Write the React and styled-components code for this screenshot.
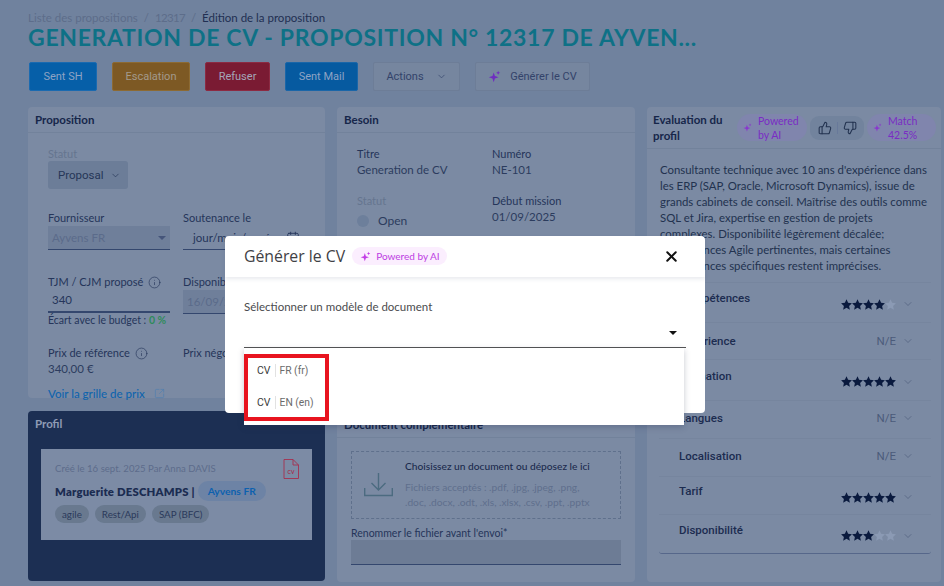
import React from 'react';
import styled, { createGlobalStyle } from 'styled-components';
import { ChevronDown, Calendar, Info, SquareArrowOutUpRight, ThumbsUp, ThumbsDown, X } from 'lucide-react';

const GlobalStyle = createGlobalStyle`
  html, body {
    margin: 0;
    padding: 0;
    width: 944px;
    height: 586px;
    overflow: hidden;
    background: #70829e;
    font-family: 'Lato', 'Liberation Sans', sans-serif;
  }
  * { box-sizing: border-box; }
`;

const Page = styled.div`
  position: relative;
  width: 944px;
  height: 586px;
  padding: 12px 0 0 28px;
  background: #70829e;
  color: #22314f;
`;

const Breadcrumb = styled.div`
  display: flex;
  gap: 6px;
  font-size: 11.5px;
  line-height: 12px;
  color: #5d6d8a;
`;

const CrumbId = styled.span`
  letter-spacing: -0.7px;
`;

const Current = styled.span`
  color: #212f52;
`;

const Title = styled.h1`
  margin: 0;
  font-family: 'Lato', sans-serif;
  font-size: 23px;
  line-height: 26px;
  font-weight: 700;
  letter-spacing: 0.68px;
  color: #0e7186;
  white-space: nowrap;
`;

const Toolbar = styled.div`
  display: flex;
  gap: 15px;
  margin: 12px 0 16px 1px;
`;

const ActionButton = styled.div`
  display: flex;
  align-items: center;
  justify-content: center;
  gap: ${(p) => p.$gap || 0}px;
  width: ${(p) => p.$w}px;
  height: 29px;
  border-radius: 2px;
  font-family: 'Roboto', sans-serif;
  font-size: 11px;
  color: ${(p) => p.$fg || '#8ea3c4'};
  background: ${(p) => p.$bg || 'transparent'};
  border: 1px solid ${(p) => p.$line || 'transparent'};
`;

const Columns = styled.div`
  display: grid;
  grid-template-columns: 297px 298px 294px;
  column-gap: 12px;
`;

const Column = styled.div`
  display: flex;
  flex-direction: column;
  gap: 13px;
`;

const Card = styled.section`
  height: ${(p) => p.$h}px;
  border-radius: 4px;
  background: ${(p) => (p.$dark ? '#1c2f53' : '#7b8aa3')};
`;

const CardHeader = styled.div`
  display: flex;
  align-items: center;
  height: ${(p) => p.$h || 26}px;
  padding: 0 7px;
  font-size: 11.5px;
  font-weight: 700;
  color: ${(p) => (p.$dark ? '#8f9cb5' : '#16264a')};
  border-bottom: 1px solid ${(p) => (p.$dark ? 'transparent' : '#72829b')};
`;

const CardBody = styled.div`
  padding: ${(p) => p.$pad || '14px 20px'};
`;

const FieldLabel = styled.div`
  display: flex;
  align-items: center;
  gap: 5px;
  height: 14px;
  font-size: 11px;
  line-height: 14px;
  white-space: nowrap;
  color: ${(p) => (p.$muted ? '#65758f' : '#25355a')};
`;

const RenameLabel = styled(FieldLabel)`
  margin-top: 7px;
  font-size: 10.5px;
`;

const StatusSelect = styled.div`
  display: flex;
  align-items: center;
  justify-content: space-between;
  width: 80px;
  height: 28px;
  margin: 0 0 22px;
  padding: 0 7px 0 10px;
  border-radius: 3px;
  background: #6c7d98;
  font-family: 'Roboto', sans-serif;
  font-size: 11.5px;
  color: #263657;
`;

const TwoCols = styled.div`
  display: grid;
  grid-template-columns: 122px 122px;
  column-gap: 13px;
  margin-bottom: ${(p) => p.$mb || 0}px;
`;

const Input = styled.div`
  display: flex;
  align-items: center;
  justify-content: space-between;
  height: ${(p) => p.$h || 24}px;
  margin-top: ${(p) => p.$mt ?? 1}px;
  padding: 0 ${(p) => p.$pr || p.$px || 4}px ${(p) => p.$pb || 0}px ${(p) => p.$px || 4}px;
  font-size: 11.5px;
  color: ${(p) => p.$fg || '#25355a'};
  background: ${(p) => p.$bg || 'transparent'};
  border-bottom: ${(p) => p.$line || 1}px solid #34476e;
`;

const Hint = styled.div`
  font-size: 10.5px;
  line-height: 13px;
  margin-top: 1px;
  white-space: nowrap;
  color: #25355a;
`;

const Good = styled.b`
  color: #2f8a5c;
`;

const Value = styled.div`
  margin-top: 1px;
  font-size: 11.5px;
  line-height: 15px;
  color: #2c3c5e;
`;

const PriceLink = styled.div`
  display: flex;
  align-items: center;
  gap: 9px;
  margin-top: 11px;
  font-size: 11.5px;
  font-weight: 500;
  color: #0f64ad;
`;

const ProfileBox = styled.div`
  position: relative;
  height: 91px;
  margin: 12px 13px 0;
  padding: 13px 14px 0;
  background: #7c8ba5;
`;

const Muted = styled.div`
  font-size: 9.6px;
  line-height: 14px;
  color: #5c6c8b;
`;

const NameRow = styled.div`
  display: flex;
  align-items: center;
  gap: 3px;
  margin-top: 5px;
  font-size: 11.3px;
  font-weight: 800;
  letter-spacing: 0.2px;
  white-space: nowrap;
  color: #1b2c51;
`;

const CompanyPill = styled.span`
  display: inline-flex;
  align-items: center;
  height: 20px;
  padding: 0 10px;
  border-radius: 10px;
  background: #6d83a5;
  font-size: 10.3px;
  font-weight: 700;
  letter-spacing: 0;
  color: #0d61af;
`;

const Tags = styled.div`
  display: flex;
  gap: 6px;
  margin-top: 4px;
`;

const Tag = styled.span`
  display: inline-flex;
  align-items: center;
  height: 18px;
  padding: 0 7px;
  border-radius: 9px;
  background: #69798f;
  font-size: 9.8px;
  color: #2b3a5b;
`;

const FileIcon = styled.svg`
  position: absolute;
  top: 10px;
  right: 13px;
`;

const InfoGrid = styled.div`
  display: grid;
  grid-template-columns: 135px 135px;
  row-gap: 17px;
`;

const StatusDot = styled.span`
  width: 12px;
  height: 12px;
  border-radius: 50%;
  background: #6d7f9b;
`;

const OpenRow = styled.div`
  display: flex;
  align-items: center;
  gap: 9px;
  margin-top: 5px;
  font-size: 12px;
  color: #2c3c5e;
`;

const DropZone = styled.div`
  display: flex;
  gap: 12px;
  height: 68px;
  padding: 7px 12px;
  border: 1px dashed #5f708c;
`;

const TrayWrap = styled.div`
  flex: none;
  display: flex;
  margin-top: 14px;
`;

const DropTitle = styled.div`
  font-size: 10.2px;
  line-height: 14px;
  font-weight: 500;
  white-space: nowrap;
  color: #1b2b4e;
`;

const DropNote = styled.div`
  margin-top: 7px;
  font-size: 10.2px;
  line-height: 15px;
  white-space: nowrap;
  color: #5f6f8d;
`;

const EvalHeader = styled(CardHeader)`
  height: 42px;
  padding: 0 5px 0 6px;
  justify-content: space-between;
`;

const EvalTitle = styled.div`
  width: 82px;
  line-height: 16px;
`;

const AiPill = styled.div`
  display: flex;
  align-items: center;
  gap: 6px;
  width: ${(p) => p.$w}px;
  height: 27px;
  padding-left: 6px;
  border-radius: 14px;
  background: #8085ad;
  font-size: 10.5px;
  font-weight: 400;
  line-height: 14px;
  color: #7a2cc4;
`;

const Feedback = styled.div`
  display: flex;
  align-items: center;
  justify-content: center;
  gap: 5px;
  width: 54px;
  height: 24px;
  margin: 0 1px;
  border-radius: 9px;
  background: #72839d;
  color: #22324f;
`;

const FeedbackSep = styled.span`
  width: 1px;
  height: 12px;
  background: #68799a;
`;

const Summary = styled.p`
  margin: 0;
  padding: 13px 0 0 13px;
  height: 133px;
  font-size: 11.4px;
  line-height: 16px;
  white-space: nowrap;
  color: #22324f;
`;

const Rows = styled.div`
  margin: 0 10px 0 12px;
  border-bottom: 1px solid #56678a;
  border-radius: 0 0 3px 3px;
`;

const Row = styled.div`
  display: flex;
  align-items: center;
  justify-content: space-between;
  height: ${(p) => p.$h}px;
  padding: 0 17px ${(p) => p.$lift || 0}px 20px;
  border-top: 1px solid #76859e;
`;

const RowLabel = styled.div`
  margin-top: ${(p) => (p.$up ? -9 : 0)}px;
  font-family: 'Roboto', sans-serif;
  font-size: 11.5px;
  font-weight: 500;
  color: #1c2c50;
`;

const RowValue = styled.div`
  display: flex;
  align-items: center;
  gap: 6px;
  margin-top: ${(p) => (p.$down ? 3 : 0)}px;
  font-family: 'Roboto', sans-serif;
  font-size: 11.5px;
  color: #4b5b7a;
`;

const Stars = styled.span`
  display: inline-flex;
`;

const Modal = styled.div`
  position: absolute;
  left: 225px;
  top: 236px;
  width: 480px;
  height: 177px;
  border-radius: 4px;
  background: #ffffff;
`;

const ModalHeader = styled.div`
  display: flex;
  align-items: center;
  gap: 7px;
  height: 41px;
  padding: 0 19px 1px;
  box-shadow: 0 2px 4px rgba(30, 50, 90, 0.1);
`;

const ModalTitle = styled.div`
  font-family: 'Open Sans', sans-serif;
  font-size: 15.8px;
  color: #3f4145;
`;

const AiBadge = styled.div`
  display: flex;
  align-items: center;
  gap: 5px;
  height: 18px;
  padding: 0 7px 0 8px;
  border-radius: 9px;
  background: #fbeefe;
  font-size: 10px;
  color: #bd3de3;
`;

const CloseButton = styled.div`
  display: flex;
  margin-left: auto;
  margin-right: 6px;
  color: #111111;
`;

const ModalLabel = styled.div`
  margin: 23px 19px 0;
  font-size: 11.5px;
  line-height: 14px;
  color: #4a4b4e;
`;

const ModelSelect = styled.div`
  position: relative;
  display: flex;
  align-items: center;
  justify-content: flex-end;
  height: 34px;
  margin: 0 19px;
  padding: 4px 9px 0 0;
  border-bottom: 1px solid #555555;
`;

const Caret = styled.span`
  width: 0;
  height: 0;
  margin-top: 1px;
  border-left: 4px solid transparent;
  border-right: 4px solid transparent;
  border-top: 4px solid ${(p) => p.$color || '#111111'};
`;

const Menu = styled.div`
  position: absolute;
  left: 0;
  top: 34px;
  width: 440px;
  height: 77px;
  padding-top: 6px;
  background: #ffffff;
  box-shadow: 0 2px 6px rgba(30, 40, 70, 0.25);
`;

const Highlight = styled.div`
  width: 85px;
  height: 67px;
  padding-left: 9px;
  border: 4px solid #e8141f;
`;

const Option = styled.div`
  display: flex;
  align-items: center;
  gap: 4px;
  height: 24px;
  margin-bottom: 8px;
  font-family: 'Roboto', sans-serif;
  font-size: 10.5px;
  color: #3c3c3c;
`;

const OptionName = styled.span`
  padding-left: 4px;
  border-left: 1px solid #e2e2e2;
  font-size: 10.3px;
  color: #6b6b6b;
`;

const Sparkle = ({ size = 12, color = '#8a35cf' }) => (
  <svg width={size} height={size} viewBox="0 0 16 16" fill={color}>
    <path d="M7 3 L8.5 7.5 L13 9 L8.5 10.5 L7 15 L5.5 10.5 L1 9 L5.5 7.5 Z" />
    <path d="M12.5 1 L13.2 2.8 L15 3.5 L13.2 4.2 L12.5 6 L11.8 4.2 L10 3.5 L11.8 2.8 Z" />
  </svg>
);

const TrayIcon = () => (
  <svg width="29" height="24" viewBox="0 0 29 24" fill="none" stroke="#4c6b80" strokeWidth="1.4">
    <path d="M.7 15 V22.5 H28.3 V15" />
    <path d="M14.5 0 V17 M7.5 10 L14.5 17 L21.5 10" />
  </svg>
);

const StarIcon = ({ on }) => (
  <svg width="11" height="11" viewBox="0 0 24 24" fill={on ? '#0a1a3e' : '#8b9ab4'}>
    <path d="M12 .8 L15.5 8.4 L23.8 9.4 L17.7 15 L19.3 23.2 L12 19.1 L4.7 23.2 L6.3 15 L.2 9.4 L8.5 8.4 Z" />
  </svg>
);

const ratings = [
  { label: 'Compétences', h: 40, on: 4 },
  { label: 'Expérience', h: 37 },
  { label: 'Formation', h: 41, on: 5 },
  { label: 'Langues', h: 38, lift: 3 },
  { label: 'Localisation', h: 38, lift: 3 },
  { label: 'Tarif', h: 38, on: 5 },
  { label: 'Disponibilité', h: 39, on: 3 },
];

const summaryLines = [
  "Consultante technique avec 10 ans d'expérience dans",
  'les ERP (SAP, Oracle, Microsoft Dynamics), issue de',
  'grands cabinets de conseil. Maîtrise des outils comme',
  'SQL et Jira, expertise en gestion de projets',
  'complexes. Disponibilité légèrement décalée;',
  'compétences Agile pertinentes, mais certaines',
  'compétences spécifiques restent imprécises.',
];

const App = () => {
  return (
    <Page>
      <GlobalStyle />
      <Breadcrumb>
        <span>Liste des propositions</span>
        <span>/</span>
        <CrumbId>12317</CrumbId>
        <span>/</span>
        <Current>Édition de la proposition</Current>
      </Breadcrumb>
      <Title>GENERATION DE CV - PROPOSITION N° 12317 DE AYVEN...</Title>

      <Toolbar>
        <ActionButton $w={68} $bg="#065fa8" $line="#1a6ab0">Sent SH</ActionButton>
        <ActionButton $w={78} $bg="#7d5924" $line="#8c6a33" $fg="#a39a8c">Escalation</ActionButton>
        <ActionButton $w={65} $bg="#7a1b33" $line="#8c2a42" $fg="#a4a6b8">Refuser</ActionButton>
        <ActionButton $w={73} $bg="#065aa0" $line="#1a66a8">Sent Mail</ActionButton>
        <ActionButton $w={87} $bg="#76869f" $line="#6d7d97" $fg="#33436a" $gap={12}>
          Actions <ChevronDown size={11} strokeWidth={1.5} />
        </ActionButton>
        <ActionButton $w={115} $bg="#76869f" $line="#6d7d97" $fg="#33436a" $gap={9}>
          <Sparkle size={13} color="#6f2dc0" /> Générer le CV
        </ActionButton>
      </Toolbar>

      <Columns>
        <Column>
          <Card $h={291}>
            <CardHeader>Proposition</CardHeader>
            <CardBody $pad="14px 20px 0">
              <FieldLabel $muted>Statut</FieldLabel>
              <StatusSelect>
                Proposal <ChevronDown size={11} strokeWidth={1.5} />
              </StatusSelect>
              <TwoCols $mb={25}>
                <div>
                  <FieldLabel>Fournisseur</FieldLabel>
                  <Input $bg="#6f7f9a" $fg="#5b6b8a">
                    Ayvens FR <Caret $color="#45557a" />
                  </Input>
                </div>
                <div>
                  <FieldLabel>Soutenance le</FieldLabel>
                  <Input $px={10} $pr={5}>
                    jour/mois/année <Calendar size={14} strokeWidth={1.5} />
                  </Input>
                </div>
              </TwoCols>
              <TwoCols $mb={19}>
                <div>
                  <FieldLabel>
                    TJM / CJM proposé <Info size={13} strokeWidth={1.2} />
                  </FieldLabel>
                  <Input $mt={2} $h={22} $line={2} $pb={3}>340</Input>
                  <Hint>Écart avec le budget : <Good>0 %</Good></Hint>
                </div>
                <div>
                  <FieldLabel>Disponibilité</FieldLabel>
                  <Input $bg="#6f7f9a" $fg="#5b6b8a" $mt={1}>16/09/2025</Input>
                </div>
              </TwoCols>
              <TwoCols>
                <div>
                  <FieldLabel>
                    Prix de référence <Info size={13} strokeWidth={1.2} />
                  </FieldLabel>
                  <Value>340,00 €</Value>
                </div>
                <div>
                  <FieldLabel>Prix négocié</FieldLabel>
                </div>
              </TwoCols>
              <PriceLink>
                Voir la grille de prix <SquareArrowOutUpRight size={11} strokeWidth={1.4} color="#4f7fb0" />
              </PriceLink>
            </CardBody>
          </Card>

          <Card $h={170} $dark>
            <CardHeader $dark>Profil</CardHeader>
            <ProfileBox>
              <Muted>Créé le 16 sept. 2025 Par Anna DAVIS</Muted>
              <NameRow>
                Marguerite DESCHAMPS | <CompanyPill>Ayvens FR</CompanyPill>
              </NameRow>
              <Tags>
                <Tag>agile</Tag>
                <Tag>Rest/Api</Tag>
                <Tag>SAP (BFC)</Tag>
              </Tags>
              <FileIcon width="16" height="20" viewBox="0 0 16 20" fill="none" stroke="#a5304f" strokeWidth="0.9">
                <path d="M1 .5 H10 L15.5 6 V19.5 H1 Z M10 .5 V6 H15.5" />
                <text x="8" y="15" fontSize="5" fontWeight="700" textAnchor="middle" fill="#a5304f" stroke="none">CV</text>
              </FileIcon>
            </ProfileBox>
          </Card>
        </Column>

        <Column>
          <Card $h={292}>
            <CardHeader>Besoin</CardHeader>
            <CardBody>
              <InfoGrid>
                <div>
                  <FieldLabel>Titre</FieldLabel>
                  <Value>Generation de CV</Value>
                </div>
                <div>
                  <FieldLabel>Numéro</FieldLabel>
                  <Value>NE-101</Value>
                </div>
                <div>
                  <FieldLabel $muted>Statut</FieldLabel>
                  <OpenRow><StatusDot /> Open</OpenRow>
                </div>
                <div>
                  <FieldLabel>Début mission</FieldLabel>
                  <Value>01/09/2025</Value>
                </div>
              </InfoGrid>
            </CardBody>
          </Card>

          <Card $h={170}>
            <CardHeader>Document complémentaire</CardHeader>
            <CardBody $pad="13px 14px 0">
              <DropZone>
                <TrayWrap><TrayIcon /></TrayWrap>
                <div>
                  <DropTitle>Choisissez un document ou déposez le ici</DropTitle>
                  <DropNote>
                    Fichiers acceptés : .pdf, .jpg, .jpeg, .png,
                    <br />
                    .doc, .docx, .odt, .xls, .xlsx, .csv, .ppt, .pptx
                  </DropNote>
                </div>
              </DropZone>
              <RenameLabel>Renommer le fichier avant l'envoi*</RenameLabel>
              <Input $bg="#6d7c95" $h={25} $mt={0} />
            </CardBody>
          </Card>
        </Column>

        <Column>
          <Card $h={475}>
            <EvalHeader>
              <EvalTitle>Evaluation du profil</EvalTitle>
              <AiPill $w={70}>
                <Sparkle size={9} /> <span>Powered<br />by AI</span>
              </AiPill>
              <Feedback>
                <ThumbsUp size={14} strokeWidth={1.8} />
                <FeedbackSep />
                <ThumbsDown size={14} strokeWidth={1.8} />
              </Feedback>
              <AiPill $w={69}>
                <Sparkle size={9} /> <span>Match<br />42.5%</span>
              </AiPill>
            </EvalHeader>
            <Summary>
              {summaryLines.map((line) => (
                <React.Fragment key={line}>{line}<br /></React.Fragment>
              ))}
            </Summary>
            <Rows>
              {ratings.map((r) => (
                <Row key={r.label} $h={r.h} $lift={r.lift}>
                  <RowLabel $up={r.on !== undefined}>{r.label}</RowLabel>
                  <RowValue $down={r.on !== undefined}>
                    {r.on !== undefined ? (
                      <Stars>
                        {[0, 1, 2, 3, 4].map((i) => <StarIcon key={i} on={i < r.on} />)}
                      </Stars>
                    ) : (
                      'N/E'
                    )}
                    <ChevronDown size={12} strokeWidth={1.3} />
                  </RowValue>
                </Row>
              ))}
            </Rows>
          </Card>
        </Column>
      </Columns>

      <Modal>
        <ModalHeader>
          <ModalTitle>Générer le CV</ModalTitle>
          <AiBadge>
            <Sparkle size={11} color="#c33fe6" /> Powered by AI
          </AiBadge>
          <CloseButton><X size={17} strokeWidth={2.8} /></CloseButton>
        </ModalHeader>
        <ModalLabel>Sélectionner un modèle de document</ModalLabel>
        <ModelSelect>
          <Caret />
          <Menu>
            <Highlight>
              <Option>CV <OptionName>FR (fr)</OptionName></Option>
              <Option>CV <OptionName>EN (en)</OptionName></Option>
            </Highlight>
          </Menu>
        </ModelSelect>
      </Modal>
    </Page>
  );
};

export default App;
